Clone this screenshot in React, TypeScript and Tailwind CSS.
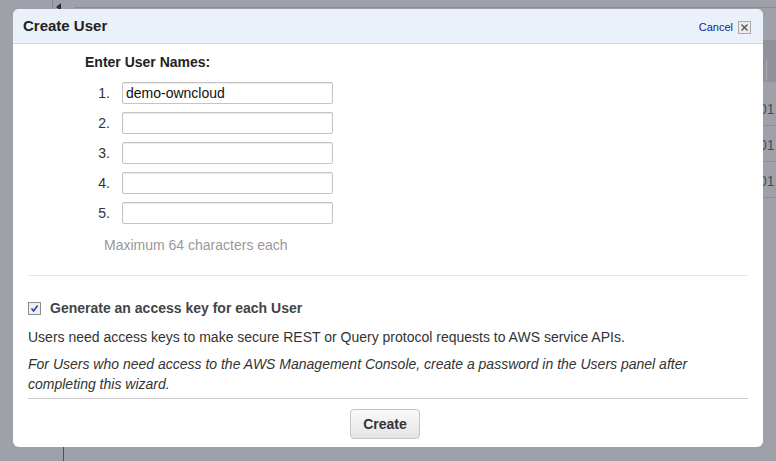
import React from "react";

const font = { fontFamily: '"Liberation Sans", Arial, sans-serif' };

function NameRow({ n, value }: { n: number; value?: string }) {
  return (
    <div className="flex items-center h-[22px]">
      <span className="w-[25px] text-right text-[14px] text-[#333]">{n}.</span>
      <input
        defaultValue={value}
        className="ml-[12px] w-[211px] h-[22px] border border-[#c4c4c4] rounded-[2px] px-[3px] text-[14px] text-[#111] bg-white shadow-[inset_0_1px_1px_rgba(0,0,0,0.08)] outline-none"
        style={font}
      />
    </div>
  );
}

export default function App() {
  return (
    <div className="relative w-[776px] h-[461px] overflow-hidden bg-[#9ea2a8]" style={font}>
      {/* page behind the overlay */}
      <div className="absolute left-[52px] top-0 w-px h-[8px] bg-[#83878d]" />
      <div className="absolute left-[56px] top-[3px] w-0 h-0 border-y-[4px] border-y-transparent border-r-[5px] border-r-[#2e3238]" />
      <div className="absolute left-[74px] top-[7px] right-0 h-px bg-[#8a8e94]" />
      <div className="absolute left-[763px] top-[40px] right-0 h-[42px] bg-[#8f9399]" />
      <div className="absolute left-[766px] top-[60px] w-px h-[20px] bg-[#a9adb2]" />
      <div className="absolute left-[763px] top-[82px] right-0 flex flex-col">
        {[44, 36, 36].map((h, i) => (
          <div
            key={i}
            className="border-b border-[#8c9096] flex items-end pb-[8px] text-[14px] leading-[16px] text-[#4a4e54]"
            style={{ height: h }}
          >
            <span className="-ml-[4px]">01</span>
          </div>
        ))}
      </div>
      <div className="absolute left-[63px] top-[447px] w-px h-[14px] bg-[#4e5258]" />

      {/* dialog */}
      <div className="absolute left-[13px] top-[9px] w-[750px] h-[438px] bg-white rounded-[6px] overflow-hidden flex flex-col">
        <div className="h-[35px] shrink-0 bg-[#eaf1fb] border-b border-[#c9d8ea] flex items-center justify-between pl-[10px] pr-[12px]">
          <span className="text-[15px] font-bold text-[#222]">Create User</span>
          <div className="flex items-center gap-[5px] pt-[3px]">
            <span className="text-[11px] text-[#1c1c8a]">Cancel</span>
            <span className="w-[13px] h-[13px] border border-[#a8a8a8] bg-[#ececec] flex items-center justify-center">
              <svg width="9" height="9" viewBox="0 0 9 9">
                <path d="M1.5 1.5 L7.5 7.5 M7.5 1.5 L1.5 7.5" stroke="#555" strokeWidth="1.4" />
              </svg>
            </span>
          </div>
        </div>

        <div className="pl-[72px] pt-[8px]">
          <div className="text-[14px] font-bold text-[#222] leading-[20px]">Enter User Names:</div>
          <div className="mt-[10px] flex flex-col gap-[8px]">
            <NameRow n={1} value="demo-owncloud" />
            <NameRow n={2} />
            <NameRow n={3} />
            <NameRow n={4} />
            <NameRow n={5} />
          </div>
          <div className="mt-[11px] ml-[19px] text-[14px] leading-[20px] text-[#999]">Maximum 64 characters each</div>
        </div>

        <div className="mx-[15px] mt-[20px] h-px bg-[#e6e6e6]" />

        <div className="px-[15px]">
          <label className="mt-[23px] flex items-center h-[18px]">
            <span className="w-[13px] h-[13px] border border-[#8c8c8c] bg-[#eef0f4] flex items-center justify-center">
              <svg width="9" height="9" viewBox="0 0 9 9">
                <path d="M1.5 4.5 L3.6 7 L7.6 1.5" fill="none" stroke="#2c3ea0" strokeWidth="1.5" />
              </svg>
            </span>
            <span className="ml-[9px] text-[14px] font-bold text-[#444]">Generate an access key for each User</span>
          </label>
          <p className="mt-[10px] text-[14px] leading-[20px] text-[#333]">
            Users need access keys to make secure REST or Query protocol requests to AWS service APIs.
          </p>
          <p className="mt-[7px] text-[14px] leading-[20px] italic text-[#333] pr-[40px]">
            For Users who need access to the AWS Management Console, create a password in the Users panel after completing this wizard.
          </p>
          <div className="mt-[4px] h-px bg-[#cccccc]" />
          <div className="flex justify-center mt-[10px] pr-[6px]">
            <button className="w-[70px] h-[30px] rounded-[4px] border border-[#c6c6c6] bg-gradient-to-b from-[#fafafa] to-[#e4e4e4] text-[14px] font-bold text-[#333]">
              Create
            </button>
          </div>
        </div>
      </div>
    </div>
  );
}
